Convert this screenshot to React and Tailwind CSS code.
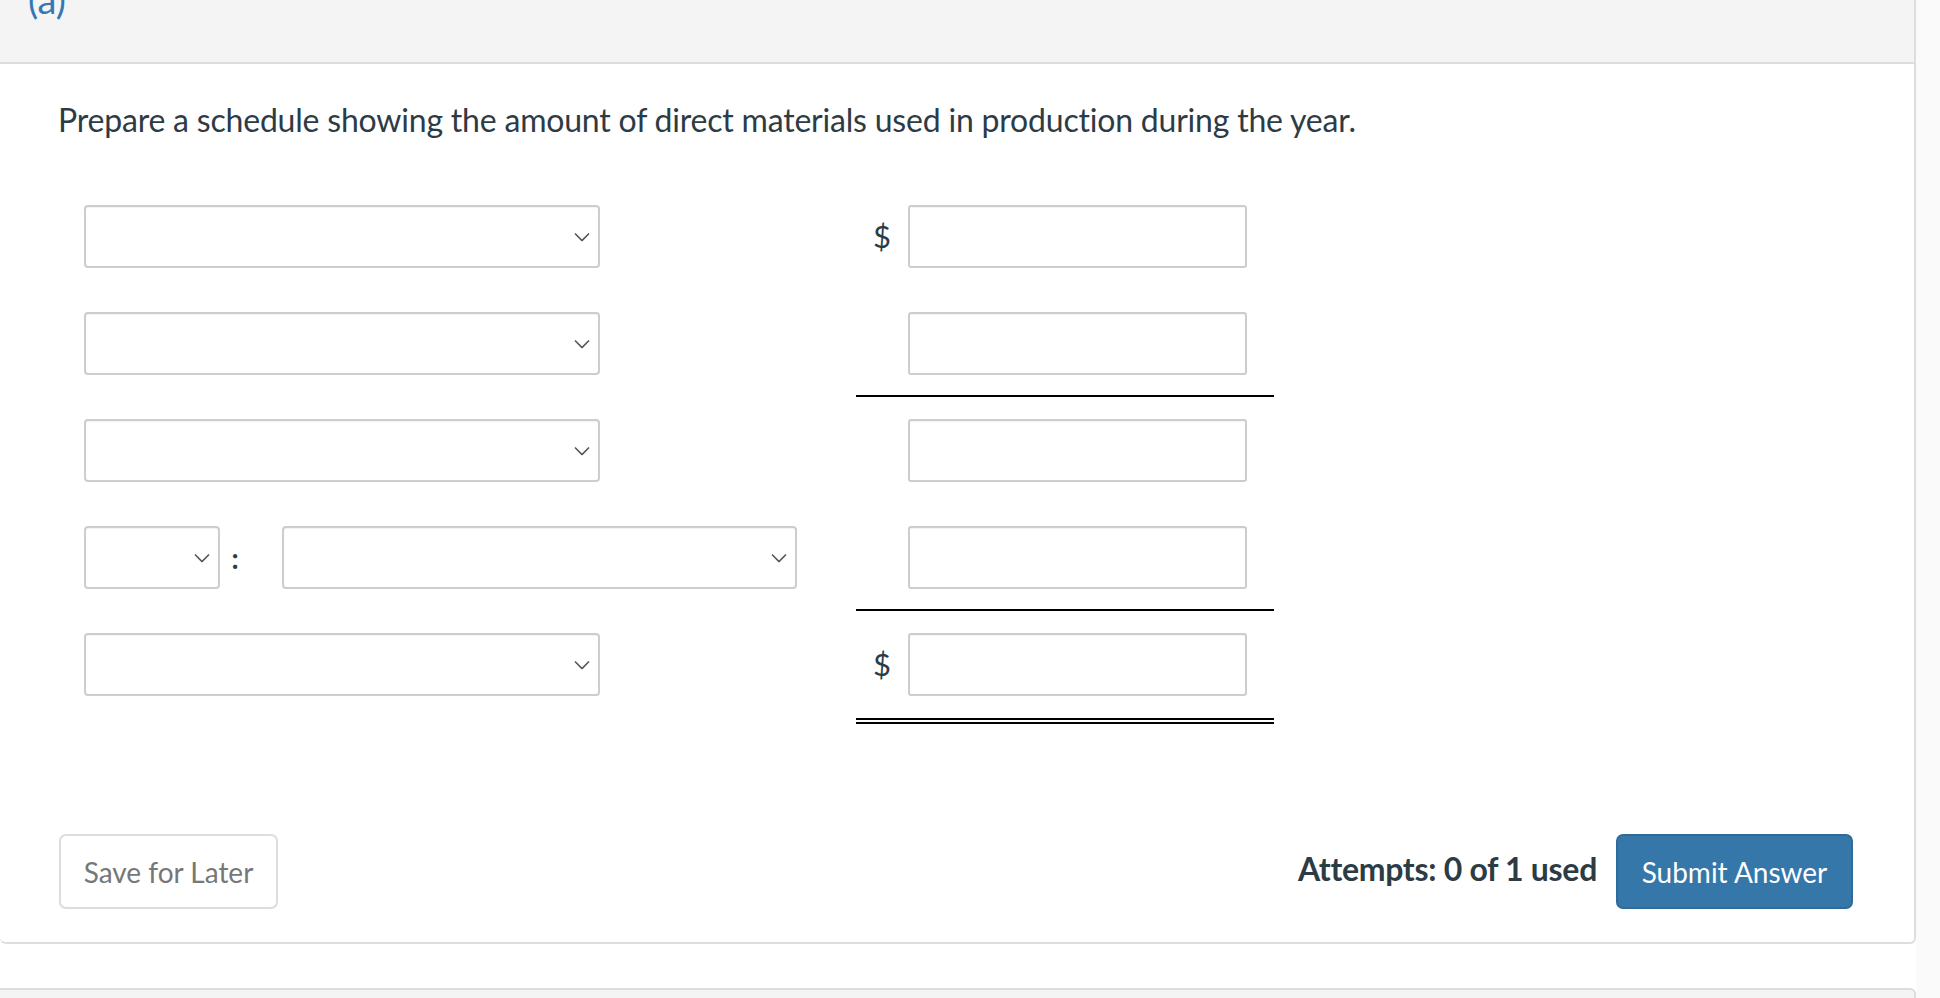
import React from "react";

const font = { fontFamily: "Lato, 'Open Sans', sans-serif" };

function Chevron() {
  return (
    <svg width="16" height="9" viewBox="0 0 16 9" className="absolute right-[8px] top-1/2 -translate-y-1/2">
      <path d="M1 1 L8 8 L15 1" fill="none" stroke="#555" strokeWidth="1.6" />
    </svg>
  );
}

function Select({ w }) {
  return (
    <div className={`relative ${w} h-[63px] border-2 border-[#cdcdcd] rounded-[4px] bg-white shadow-[inset_0_1px_1px_rgba(0,0,0,0.05)]`}>
      <Chevron />
    </div>
  );
}

function Input() {
  return <div className="w-[339px] h-[63px] border-2 border-[#cdcdcd] rounded-[3px] bg-white shadow-[inset_0_1px_1px_rgba(0,0,0,0.05)]" />;
}

function Row({ left, dollar, line }) {
  const rightCls =
    line === "single"
      ? "h-[107px] border-b-2 border-black"
      : line === "double"
      ? "h-[113px] border-b-[6px] border-double border-black"
      : "h-[107px]";
  return (
    <div className="flex">
      <div className="w-[772px] h-[107px] pt-[22px] flex items-start">{left}</div>
      <div className={`w-[418px] pt-[22px] flex items-start box-border ${rightCls}`}>
        <div className="w-[52px] h-[63px] flex items-center justify-center text-[31px] text-[#2d3b45]">
          {dollar ? "$" : ""}
        </div>
        <Input />
      </div>
    </div>
  );
}

export default function App() {
  return (
    <div className="w-[1940px] h-[998px] bg-white overflow-hidden flex" style={font}>
      <div className="w-[1916px] flex flex-col">
        <div className="h-[944px] border-r-2 border-b-2 border-[#dddddd] rounded-br-[6px] rounded-bl-[6px] flex flex-col bg-white">
          <div className="h-[64px] bg-[#f4f4f4] border-b-2 border-[#dddddd] overflow-hidden">
            <div className="pl-[28px] -mt-[22px] text-[38px] leading-[42px] text-[#3378b3]">(a)</div>
          </div>
          <div className="pl-[58px] pt-[37px] text-[32px] leading-[38px] tracking-[-0.2px] text-[#2d3b45]">
            Prepare a schedule showing the amount of direct materials used in production during the year.
          </div>
          <div className="pl-[84px] mt-[44px] flex flex-col">
            <Row left={<Select w="w-[516px]" />} dollar />
            <Row left={<Select w="w-[516px]" />} line="single" />
            <Row left={<Select w="w-[516px]" />} />
            <Row
              left={
                <div className="flex items-center">
                  <Select w="w-[136px]" />
                  <span className="w-[30px] text-center text-[28px] text-[#2d3b45] font-bold">:</span>
                  <div className="ml-[32px]">
                    <Select w="w-[515px]" />
                  </div>
                </div>
              }
              line="single"
            />
            <Row left={<Select w="w-[516px]" />} dollar line="double" />
          </div>
          <div className="mt-auto mb-[33px] pl-[59px] pr-[61px] flex items-center justify-between">
            <button className="w-[219px] h-[75px] border-2 border-[#dddddd] rounded-[7px] bg-white text-[28px] text-[#777777]">
              Save for Later
            </button>
            <div className="flex items-center gap-[19px]">
              <span className="mb-[5px] text-[32px] tracking-[-0.3px] font-bold text-[#2d3b45]">Attempts: 0 of 1 used</span>
              <button className="w-[237px] h-[75px] rounded-[7px] border-2 border-[#2e6a9a] bg-[#3677aa] text-white text-[28px]">
                Submit Answer
              </button>
            </div>
          </div>
        </div>
        <div className="mt-[44px] flex-1 bg-[#f4f4f4] border-t-2 border-r-2 border-[#dddddd] rounded-tr-[6px]" />
      </div>
      <div className="flex-1 bg-[#fafafa]" />
    </div>
  );
}
